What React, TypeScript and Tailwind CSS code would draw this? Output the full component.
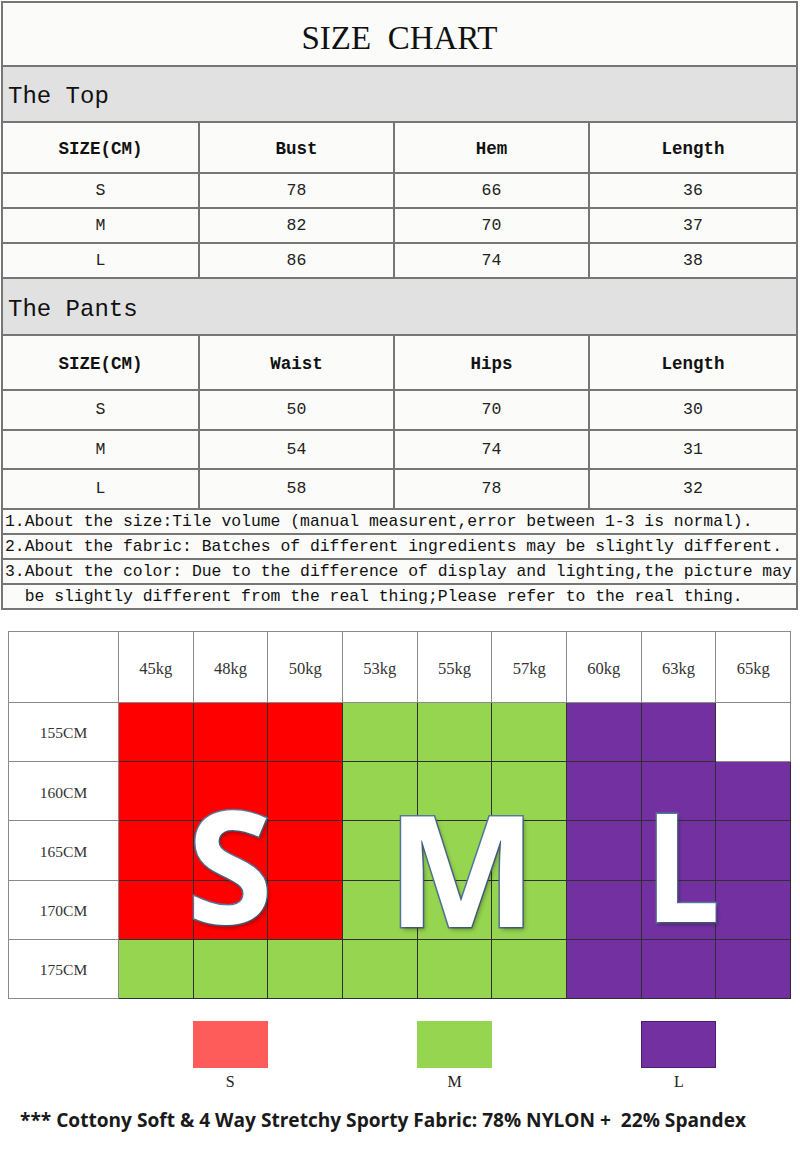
import React from "react";

const mono = "font-['Liberation_Mono',monospace]";
const serif = "font-['Liberation_Serif',serif]";

function SectionTable({
  title,
  titleH,
  headerH,
  headers,
  rows,
  rowHs,
}: {
  title: string;
  titleH: string;
  headerH: string;
  headers: string[];
  rows: string[][];
  rowHs: string[];
}) {
  return (
    <>
      <div className={`${titleH} bg-[#e1e1e1] border-b-2 border-[#767676] flex items-center pl-[5px] pt-[6px] ${mono} text-[24px] text-[#111]`}>
        {title}
      </div>
      <div className={`${headerH} grid grid-cols-[197px_195px_195px_1fr] border-b-2 border-[#767676] bg-[#fbfbf9]`}>
        {headers.map((h, i) => (
          <div
            key={i}
            className={`flex items-center justify-center pt-[3px] ${mono} font-bold text-[17.5px] text-[#111] ${i < 3 ? "border-r-2 border-[#767676]" : ""}`}
          >
            {h}
          </div>
        ))}
      </div>
      {rows.map((r, ri) => (
        <div key={ri} className={`${rowHs[ri]} grid grid-cols-[197px_195px_195px_1fr] border-b-2 border-[#767676] bg-[#fbfbf9]`}>
          {r.map((c, i) => (
            <div
              key={i}
              className={`flex items-center justify-center pt-[1px] ${mono} text-[16.5px] text-[#222] ${i < 3 ? "border-r-2 border-[#767676]" : ""}`}
            >
              {c}
            </div>
          ))}
        </div>
      ))}
    </>
  );
}

const weights = ["45kg", "48kg", "50kg", "53kg", "55kg", "57kg", "60kg", "63kg", "65kg"];
const heights = ["155CM", "160CM", "165CM", "170CM", "175CM"];
const R = "bg-[#ff0000]";
const G = "bg-[#96d54f]";
const P = "bg-[#7230a1]";
const W = "bg-white";
const colors: string[][] = [
  [R, R, R, G, G, G, P, P, W],
  [R, R, R, G, G, G, P, P, P],
  [R, R, R, G, G, G, P, P, P],
  [R, R, R, G, G, G, P, P, P],
  [G, G, G, G, G, G, P, P, P],
];

const bigLetter =
  "absolute font-['Open_Sans',sans-serif] font-bold leading-none text-white [-webkit-text-stroke:3px_#56789a] [paint-order:stroke_fill] [text-shadow:2px_3px_4px_rgba(0,0,0,0.3)]";

export default function App() {
  return (
    <div className="w-[800px] h-[1155px] bg-white overflow-hidden">
      {/* Top size chart table */}
      <div className="ml-[1px] mt-[1px] w-[797px] border-2 border-[#767676] bg-[#fbfbf9]">
        <div className={`h-[64px] border-b-2 border-[#767676] flex items-center justify-center pt-[9px] ${serif} text-[33px] text-[#111] whitespace-pre`}>
          SIZE  CHART
        </div>
        <SectionTable
          title="The Top"
          titleH="h-[56px]"
          headerH="h-[51px]"
          headers={["SIZE(CM)", "Bust", "Hem", "Length"]}
          rows={[
            ["S", "78", "66", "36"],
            ["M", "82", "70", "37"],
            ["L", "86", "74", "38"],
          ]}
          rowHs={["h-[35px]", "h-[35px]", "h-[35px]"]}
        />
        <SectionTable
          title="The Pants"
          titleH="h-[57px]"
          headerH="h-[55px]"
          headers={["SIZE(CM)", "Waist", "Hips", "Length"]}
          rows={[
            ["S", "50", "70", "30"],
            ["M", "54", "74", "31"],
            ["L", "58", "78", "32"],
          ]}
          rowHs={["h-[40px]", "h-[39px]", "h-[40px]"]}
        />
        <div className={`${mono} text-[16.4px] text-[#111] whitespace-pre`}>
          <div className="h-[25px] border-b-2 border-[#767676] flex items-center pl-[2px] pt-[1px]">
            1.About the size:Tile volume (manual measurent,error between 1-3 is normal).
          </div>
          <div className="h-[25px] border-b-2 border-[#767676] flex items-center pl-[2px] pt-[1px]">
            2.About the fabric: Batches of different ingredients may be slightly different.
          </div>
          <div className="h-[25px] border-b-2 border-[#767676] flex items-center pl-[2px] pt-[1px]">
            3.About the color: Due to the difference of display and lighting,the picture may
          </div>
          <div className="h-[23px] flex items-center pl-[2px] pt-[1px]">
            {"  be slightly different from the real thing;Please refer to the real thing."}
          </div>
        </div>
      </div>

      {/* Weight / height chart */}
      <div className="relative ml-[8px] mt-[21px] w-[783px] border-t border-l border-[#8a8a8a]">
        <div className="grid grid-cols-[110px_repeat(9,1fr)] grid-rows-[71px_repeat(5,59.2px)]">
          <div className="border-r border-b border-[#8a8a8a] bg-white" />
          {weights.map((w) => (
            <div
              key={w}
              className={`border-r border-b border-[#8a8a8a] bg-white flex items-center justify-center pt-[5px] ${serif} text-[16.5px] text-[#333]`}
            >
              {w}
            </div>
          ))}
          {heights.map((h, ri) => (
            <React.Fragment key={h}>
              <div className={`border-r border-b border-[#8a8a8a] bg-white flex items-center justify-center pt-[2px] ${serif} text-[15.5px] text-[#333]`}>
                {h}
              </div>
              {colors[ri].map((c, ci) => (
                <div
                  key={ci}
                  className={`border-r border-b ${c === W ? "border-[#8a8a8a]" : "border-[#2f2f2f]"} ${c}`}
                />
              ))}
            </React.Fragment>
          ))}
        </div>
        <span className={`${bigLetter} left-[178px] top-[153px] text-[156px]`}>S</span>
        <span className={`${bigLetter} left-[378px] top-[158px] text-[154px] tracking-[2px] scale-x-[1.03] origin-left`}>M</span>
        <span className={`${bigLetter} left-[636px] top-[156px] text-[151px] scale-x-[0.88] origin-left`}>L</span>
      </div>

      {/* Legend */}
      <div className="ml-[8px] mt-[22px] w-[783px] grid grid-cols-[110px_repeat(9,1fr)]">
        <div className="col-start-3 flex flex-col items-center">
          <div className="h-[47px] w-full bg-[#fe5c5a]" />
          <div className={`${serif} text-[16px] text-[#222] mt-[4px] leading-5`}>S</div>
        </div>
        <div className="col-start-6 flex flex-col items-center">
          <div className="h-[47px] w-full bg-[#96d54f]" />
          <div className={`${serif} text-[16px] text-[#222] mt-[4px] leading-5`}>M</div>
        </div>
        <div className="col-start-9 flex flex-col items-center">
          <div className="h-[47px] w-full bg-[#7230a1] border border-[#4a1f70]" />
          <div className={`${serif} text-[16px] text-[#222] mt-[4px] leading-5`}>L</div>
        </div>
      </div>

      <div className="mt-[16px] pl-[20px] font-['Open_Sans',sans-serif] font-bold text-[19.1px] text-[#1a1a1a] whitespace-pre leading-6">
        *** Cottony Soft &amp; 4 Way Stretchy Sporty Fabric: 78% NYLON +  22% Spandex
      </div>
    </div>
  );
}
